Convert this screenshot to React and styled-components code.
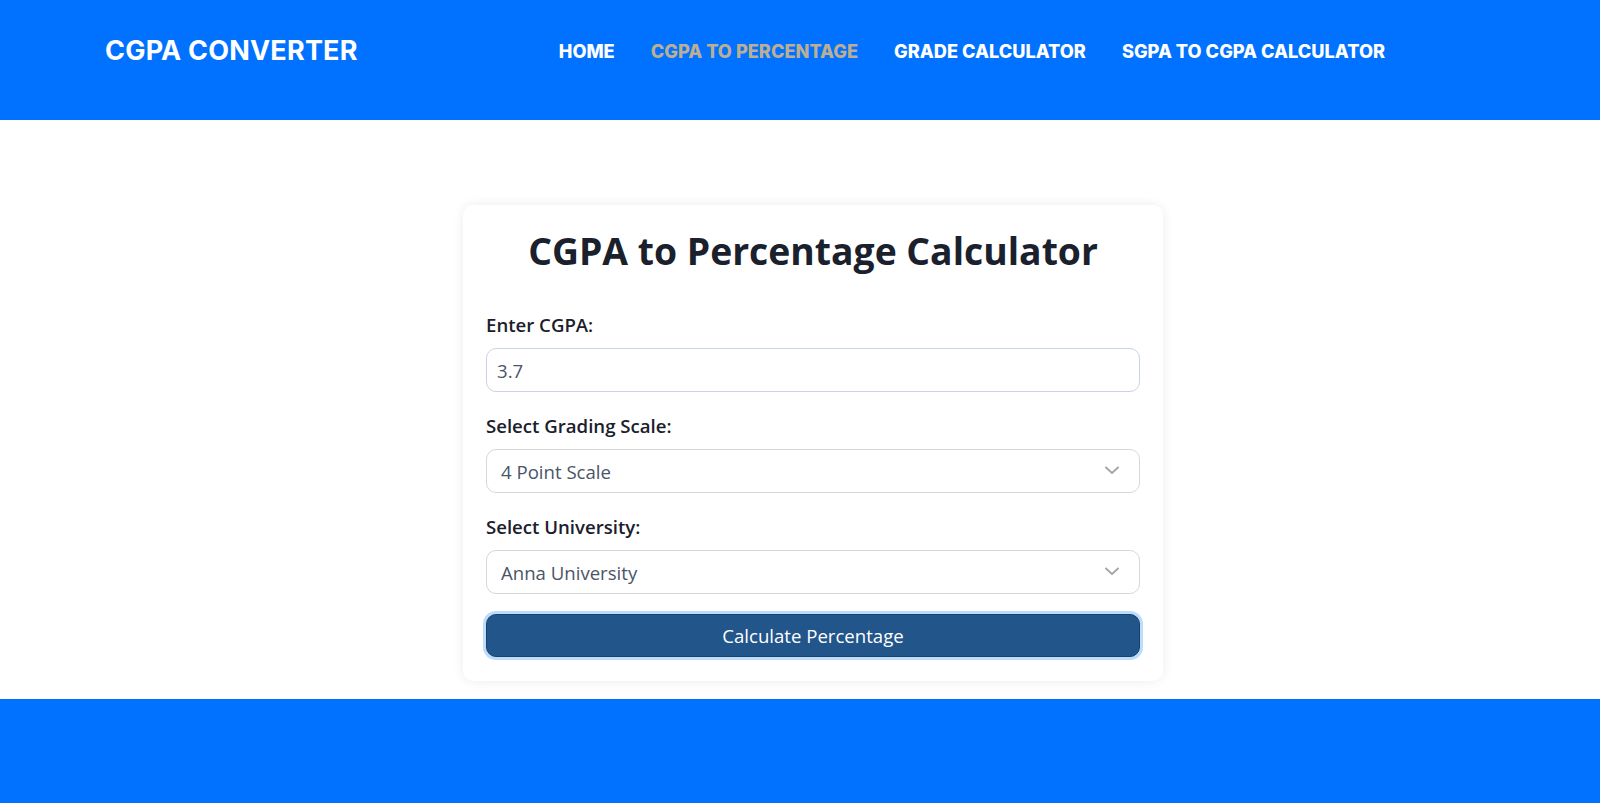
import React, { useState } from "react";
import styled, { createGlobalStyle } from "styled-components";

const GlobalStyle = createGlobalStyle`
	* {
		box-sizing: border-box;
	}
	body {
		margin: 0;
		background: #ffffff;
		font-family: "Open Sans", "Liberation Sans", sans-serif;
	}
`;

const Page = styled.div`
	display: flex;
	flex-direction: column;
	min-height: 803px;
`;

const Header = styled.header`
	display: flex;
	align-items: flex-start;
	justify-content: space-between;
	height: 120px;
	padding: 36px 215px 0 105px;
	background: #0072ff;
`;

const Logo = styled.div`
	color: #ffffff;
	font-family: Inter, "Liberation Sans", sans-serif;
	font-size: 27px;
	font-weight: 700;
	line-height: 30px;
	letter-spacing: 0.2px;
`;

const Nav = styled.nav`
	display: flex;
	gap: 36px;
	padding-top: 5px;
`;

const NavLink = styled.a`
	color: ${(p) => (p.$active ? "#bcae93" : "#ffffff")};
	font-family: Inter, "Liberation Sans", sans-serif;
	font-size: 18.2px;
	font-weight: 800;
	line-height: 20px;
	text-decoration: none;
	cursor: pointer;
`;

const Main = styled.main`
	display: flex;
	justify-content: center;
	padding: 85px 0 18px 26px;
`;

const Card = styled.div`
	width: 700px;
	padding: 23px 23px 24px 23px;
	background: #ffffff;
	border-radius: 10px;
	box-shadow: 0 0 12px rgba(0, 0, 0, 0.08);
`;

const Title = styled.h1`
	margin: 0 0 37px;
	color: #1a202c;
	font-size: 37.3px;
	font-weight: 700;
	line-height: 46px;
	text-align: center;
`;

const Field = styled.div`
	display: flex;
	flex-direction: column;
	gap: 10px;
	margin-bottom: 20px;
`;

const Label = styled.label`
	color: #1a202c;
	font-size: 18.6px;
	font-weight: 600;
	line-height: 27px;
`;

const TextInput = styled.input`
	width: 100%;
	height: 44px;
	padding: 0 10px;
	border: 1px solid #c9d3e2;
	border-radius: 10px;
	color: #4a5568;
	font-family: inherit;
	font-size: 18.6px;
	outline: none;
`;

const SelectWrap = styled.div`
	position: relative;
`;

const Select = styled.select`
	width: 100%;
	height: 44px;
	padding: 0 40px 0 14px;
	border: 1px solid #d3d8de;
	border-radius: 10px;
	background: #ffffff;
	color: #4a5568;
	font-family: inherit;
	font-size: 18.6px;
	appearance: none;
	outline: none;
`;

const Chevron = styled.svg`
	position: absolute;
	top: 17px;
	right: 21px;
	pointer-events: none;
`;

const Button = styled.button`
	width: 100%;
	height: 43px;
	border: 1px solid #1a416b;
	border-radius: 10px;
	background: #22558a;
	box-shadow: 0 0 0 3px #bcdcfc;
	color: #ffffff;
	font-family: inherit;
	font-size: 18.6px;
	cursor: pointer;
`;

const Footer = styled.footer`
	flex: 1;
	min-height: 105px;
	background: #0072ff;
`;

function Dropdown({ value, onChange, options }) {
	return (
		<SelectWrap>
			<Select value={value} onChange={(e) => onChange(e.target.value)}>
				{options.map((o) => (
					<option key={o}>{o}</option>
				))}
			</Select>
			<Chevron width="14" height="9" viewBox="0 0 14 9" fill="none">
				<path d="M1 1.5l6 5.5 6-5.5" stroke="#a8a8a8" strokeWidth="2" strokeLinecap="round" strokeLinejoin="round" />
			</Chevron>
		</SelectWrap>
	);
}

export default function App() {
	const [cgpa, setCgpa] = useState("3.7");
	const [scale, setScale] = useState("4 Point Scale");
	const [university, setUniversity] = useState("Anna University");

	return (
		<Page>
			<GlobalStyle />
			<Header>
				<Logo>CGPA CONVERTER</Logo>
				<Nav>
					<NavLink>HOME</NavLink>
					<NavLink $active>CGPA TO PERCENTAGE</NavLink>
					<NavLink>GRADE CALCULATOR</NavLink>
					<NavLink>SGPA TO CGPA CALCULATOR</NavLink>
				</Nav>
			</Header>
			<Main>
				<Card>
					<Title>CGPA to Percentage Calculator</Title>
					<Field>
						<Label>Enter CGPA:</Label>
						<TextInput value={cgpa} onChange={(e) => setCgpa(e.target.value)} />
					</Field>
					<Field>
						<Label>Select Grading Scale:</Label>
						<Dropdown value={scale} onChange={setScale} options={["4 Point Scale", "10 Point Scale"]} />
					</Field>
					<Field>
						<Label>Select University:</Label>
						<Dropdown value={university} onChange={setUniversity} options={["Anna University", "Mumbai University", "VTU"]} />
					</Field>
					<Button>Calculate Percentage</Button>
				</Card>
			</Main>
			<Footer />
		</Page>
	);
}
